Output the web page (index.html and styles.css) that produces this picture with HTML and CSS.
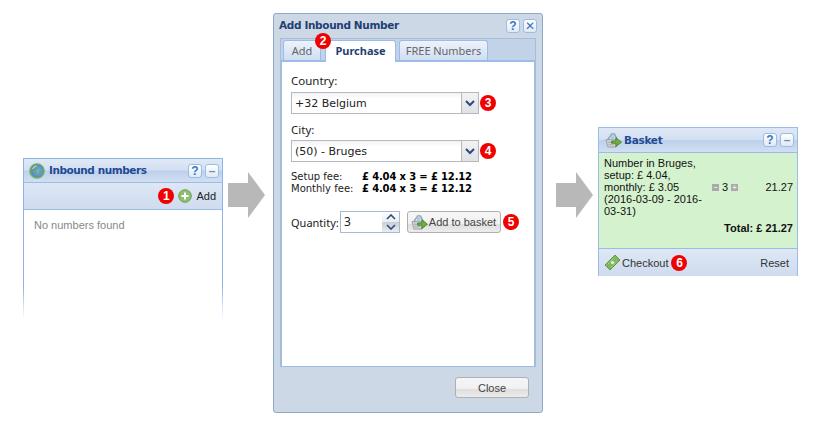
FILE: index.html
```html
<!DOCTYPE html>
<html lang="en">
<head>
<meta charset="utf-8">
<title>Inbound numbers</title>
<link rel="stylesheet" href="styles.css">
</head>
<body>
<svg width="0" height="0" class="defs">
  <defs>
    <radialGradient id="earth" cx=".55" cy=".5" r=".6"><stop offset="0" stop-color="#7fb2dc"/><stop offset=".7" stop-color="#4f8fc4"/><stop offset="1" stop-color="#6fae8f"/></radialGradient>
    <symbol id="basket" viewBox="0 0 18 17">
      <path d="M1 8h12l-1.500 8H3z" fill="#ccd0d4" stroke="#9aa2a8"/>
      <path d="M3 8l4-6h3l3 6" fill="none" stroke="#8aa2ba" stroke-width="1.500"/>
      <path d="M6 3h4v5H6z" fill="#b3c6da"/>
      <path d="M3 11h7M3.500 13.500h6" stroke="#a7adb2"/>
      <path d="M7 9.500h4.500V6l6 4.800-6 4.800V12H7z" fill="#72ad3f" stroke="#3e7a24" stroke-width=".8"/>
    </symbol>
  </defs>
</svg>

<section class="win win-list">
  <header class="head">
    <svg class="globe" width="16" height="16" viewBox="0 0 16 16"><circle cx="8" cy="8" r="7.200" fill="url(#earth)" stroke="#79b04f" stroke-width="1.300"/><path d="M4 5l3-2 2 2-2 3 1 3-2 1-2-3zM10 8l3-1 0 3-2 2z" fill="#6f9f8a"/><path d="M3.500 6a5 5 0 0 1 4-3" fill="none" stroke="#d8ecd0"/></svg>
    <h2 class="title">Inbound numbers</h2>
    <span class="tool">?</span><span class="tool tool-min">–</span>
  </header>
  <div class="toolbar">
    <span class="badge">1</span>
    <svg class="plus" width="14" height="14" viewBox="0 0 14 14"><circle cx="7" cy="7" r="6.300" fill="#8cc06f" stroke="#6d9f57"/><path d="M7 3.500v7M3.500 7h7" stroke="#fff" stroke-width="2"/></svg>
    <span class="add-label">Add</span>
  </div>
  <p class="empty">No numbers found</p>
</section>

<svg class="arrow arrow-a" width="37" height="46" viewBox="0 0 37 46"><path d="M0 11h20V0l17 23-17 23V35H0z" fill="#b8b8b8"/></svg>

<section class="win win-dialog">
  <header class="dialog-head">
    <h2 class="dialog-title">Add Inbound Number</h2>
    <span class="tool">?</span><span class="tool tool-close">✕</span>
  </header>
  <div class="tabbox">
    <nav class="tabs">
      <span class="tab tab-add">Add</span>
      <span class="badge badge-tab">2</span>
      <span class="tab tab-active">Purchase</span>
      <span class="tab tab-free">FREE Numbers</span>
    </nav>
    <div class="tabbody">
      <label class="lbl">Country:</label>
      <div class="combo-row">
        <div class="combo"><span class="combo-text">+32 Belgium</span><span class="combo-btn"><svg width="10" height="7" viewBox="0 0 10 7"><path d="M1 1l4 4 4-4" fill="none" stroke="#2c4a7c" stroke-width="2"/></svg></span></div>
        <span class="badge">3</span>
      </div>
      <label class="lbl lbl-city">City:</label>
      <div class="combo-row">
        <div class="combo"><span class="combo-text">(50) - Bruges</span><span class="combo-btn"><svg width="10" height="7" viewBox="0 0 10 7"><path d="M1 1l4 4 4-4" fill="none" stroke="#2c4a7c" stroke-width="2"/></svg></span></div>
        <span class="badge">4</span>
      </div>
      <dl class="fees">
        <dt>Setup fee:</dt><dd>£ 4.04 x 3 = £ 12.12</dd>
        <dt>Monthly fee:</dt><dd>£ 4.04 x 3 = £ 12.12</dd>
      </dl>
      <div class="qty-row">
        <span class="qty-label">Quantity:</span>
        <div class="spinner">
          <span class="spin-val">3</span>
          <span class="spin-btns">
            <span class="spin-up"><svg width="10" height="6" viewBox="0 0 10 6"><path d="M1 5l4-4 4 4" fill="none" stroke="#2c4a7c" stroke-width="1.600"/></svg></span>
            <span class="spin-down"><svg width="10" height="6" viewBox="0 0 10 6"><path d="M1 1l4 4 4-4" fill="none" stroke="#2c4a7c" stroke-width="1.600"/></svg></span>
          </span>
        </div>
        <button class="btn btn-basket"><svg class="btn-ico" width="17" height="16"><use href="#basket"/></svg>Add to basket</button>
        <span class="badge">5</span>
      </div>
    </div>
  </div>
  <footer class="dialog-foot"><button class="btn btn-close">Close</button></footer>
</section>

<svg class="arrow arrow-b" width="37" height="46" viewBox="0 0 37 46"><path d="M0 11h20V0l17 23-17 23V35H0z" fill="#b8b8b8"/></svg>

<section class="win win-basket">
  <header class="head">
    <svg class="basket-ico" width="17" height="16"><use href="#basket"/></svg>
    <h2 class="title">Basket</h2>
    <span class="tool">?</span><span class="tool tool-min">–</span>
  </header>
  <div class="basket-body">
    <div class="line">
      <span class="line-desc">Number in Bruges, setup: £ 4.04, monthly: £ 3.05 (2016-03-09 - 2016-03-31)</span>
      <span class="line-qty"><span class="qbtn">−</span><span class="qnum">3</span><span class="qbtn">+</span></span>
      <span class="line-sum">21.27</span>
    </div>
    <div class="total">Total: £ 21.27</div>
  </div>
  <footer class="basket-foot">
    <svg class="ticket" width="17" height="17" viewBox="0 0 17 17"><path d="M1 11L11 1l5 5L6 16z" fill="#7fb765" stroke="#5e9a48"/><path d="M4 10l6-6M7 13l6-6" stroke="#a8d48f" stroke-dasharray="2 1"/><circle cx="8.500" cy="8.500" r="1.600" fill="#e4f2d8"/></svg>
    <span class="checkout">Checkout</span>
    <span class="badge">6</span>
    <span class="reset">Reset</span>
  </footer>
</section>
</body>
</html>
```
FILE: styles.css
```css
* { box-sizing: border-box; }
html, body { margin: 0; padding: 0; }
body {
  width: 822px;
  height: 425px;
  position: relative;
  overflow: hidden;
  background: #fff;
  font-family: "Liberation Sans", Arial, sans-serif;
  font-size: 11px;
  color: #111;
}
.defs { position: absolute; }
.win { position: absolute; }
.arrow { position: absolute; top: 172px; }
.arrow-a { left: 228px; }
.arrow-b { left: 556px; }

.badge {
  flex: none;
  width: 16px;
  height: 16px;
  border-radius: 50%;
  background: #f00000;
  color: #fff;
  font: bold 12px/16px "Liberation Sans", sans-serif;
  text-align: center;
}

.head {
  height: 24px;
  display: flex;
  align-items: center;
  padding: 0 3px 0 5px;
  border-bottom: 1px solid #9bbce6;
  background: linear-gradient(#dfe8f6 0, #d3e0f2 48%, #bdd0ec 52%, #d2dff1 100%);
}
.win-basket .head { height: 25px; padding-left: 6px; }
.title {
  flex: 1;
  margin: 0 0 2px 4px;
  font: bold 10.500px "DejaVu Sans", Verdana, sans-serif;
  letter-spacing: -.45px;
  color: #1f4a94;
}
.win-basket .title { margin: 0 0 1px 2px; letter-spacing: -.3px; }
.tool {
  flex: none;
  width: 14px;
  height: 14px;
  margin-left: 3px;
  border: 1px solid #9bbce6;
  border-radius: 3px;
  background: linear-gradient(#fff, #dfe9f6);
  color: #3a78c0;
  font: bold 12px/12px "Liberation Sans", sans-serif;
  text-align: center;
}
.tool-min { color: #6f8fb5; }

.win-list {
  left: 23px;
  top: 158px;
  width: 200px;
  height: 160px;
  border: 1px solid #9bbce6;
  border-bottom: 0;
  border-image: linear-gradient(#8fb4e6 80%, #fff) 1;
}
.toolbar {
  height: 27px;
  display: flex;
  align-items: center;
  justify-content: flex-end;
  gap: 4px;
  padding-right: 6px;
  border-bottom: 1px solid #9bbce6;
  background: linear-gradient(#dde7f5, #cfdcef);
}
.plus { flex: none; }
.add-label { font-size: 11px; color: #222; }
.empty { margin: 9px 0 0 10px; font-size: 11px; line-height: 13px; color: #888; }

.win-dialog {
  left: 273px;
  top: 13px;
  width: 270px;
  height: 400px;
  padding: 0 6px;
  display: flex;
  flex-direction: column;
  border: 1px solid #8fa8c8;
  border-radius: 3px;
  background: #cdd8e7;
}
.dialog-head {
  flex: none;
  height: 24px;
  display: flex;
  align-items: center;
  margin-left: -1px;
  margin-right: -1px;
}
.dialog-title {
  flex: 1;
  margin: 0 0 2px;
  font: bold 10.500px "DejaVu Sans", Verdana, sans-serif;
  letter-spacing: -.35px;
  color: #1f3f73;
}
.tool-close { font: 12px/12px "DejaVu Sans", sans-serif; color: #3f75b5; }
.tabbox {
  flex: 1;
  display: flex;
  flex-direction: column;
  min-height: 0;
  padding-top: 1px;
  background: #c2d2e8;
  border: 1px solid #a9bcd6;
  border-bottom: 0;
}
.tabs {
  flex: none;
  height: 22px;
  display: flex;
  align-items: flex-end;
  gap: 3px;
  padding-left: 2px;
  border-bottom: 2px solid #9bbce6;
  position: relative;
  font: 11px "Noto Sans", Tahoma, sans-serif;
}
.tab {
  height: 20px;
  padding: 2px 0 0;
  text-align: center;
  border: 1px solid #9bbce6;
  border-bottom: 0;
  border-radius: 3px 3px 0 0;
  background: linear-gradient(#eef3fa, #cfdef2);
  color: #666;
  line-height: 15px;
}
.tab-add { width: 38px; margin-right: 1px; }
.tab-active {
  width: 71px;
  height: 22px;
  margin-bottom: -2px;
  padding-top: 2px;
  font-weight: bold;
  color: #1f3f73;
  background: #fff;
}
.tab-free { width: 89px; letter-spacing: -.05px; }
.badge-tab { position: absolute; left: 34px; top: -7px; }
.tabbody {
  flex: 1;
  padding: 12px 9px 0;
  background: #fff;
  border: 1px solid #9bbce6;
  border-top: 0;
  font-family: "Noto Sans", Tahoma, sans-serif;
  font-size: 11px;
}
.lbl { display: block; height: 13px; font-size: 11.500px; line-height: 13px; color: #222; }
.lbl-city { margin-top: 9px; }
.combo-row { display: flex; align-items: center; gap: 1px; margin-top: 5px; }
.lbl-city + .combo-row { margin-top: 4px; }
.combo {
  width: 188px;
  height: 22px;
  display: flex;
  border: 1px solid #b5b9bf;
  background: linear-gradient(#f2f2f2, #fff 6px);
}
.combo-text { flex: 1; padding: 1px 3px 0; font: 11px/20px "DejaVu Sans", Tahoma, sans-serif; color: #222; }
.combo-btn {
  width: 17px;
  display: flex;
  align-items: center;
  justify-content: center;
  border-left: 1px solid #b5b9bf;
  background: linear-gradient(#f2f2f2, #dfe2e6);
}
.fees {
  display: grid;
  grid-template-columns: 71px auto;
  margin: 9px 0 0;
  font: 10px/12px "DejaVu Sans", Tahoma, sans-serif;
  color: #222;
}
.fees dt, .fees dd { margin: 0; }
.fees dd { font-weight: bold; color: #000; letter-spacing: -.15px; }
.qty-row { display: flex; align-items: center; margin-top: 16px; }
.qty-label { width: 49px; font-size: 11px; color: #222; }
.spinner { width: 60px; height: 22px; display: flex; border: 1px solid #a9b9d2; }
.spin-val { flex: 1; padding-left: 3px; font-size: 12px; line-height: 20px; color: #222; }
.spin-btns { width: 17px; display: flex; flex-direction: column; }
.spin-up, .spin-down { flex: 1; display: flex; align-items: center; justify-content: center; }
.spin-up { background: linear-gradient(#fff, #e8edf4); }
.spin-down { background: linear-gradient(#c9ced4, #e8ebef); }
.btn {
  display: flex;
  align-items: center;
  justify-content: center;
  border: 1px solid #b0b0b0;
  border-radius: 3px;
  background: linear-gradient(#f6f6f6 0, #f1f1f1 58%, #dedede 60%, #ececec 100%);
  color: #444;
  font: 11px "Liberation Sans", sans-serif;
  padding: 0;
}
.btn-basket { width: 94px; height: 22px; margin: 0 2px 0 7px; padding-right: 1px; white-space: nowrap; }
.btn-ico { margin-right: 1px; }
.dialog-foot {
  flex: none;
  height: 45px;
  padding: 10px 7px 0 0;
  display: flex;
  justify-content: flex-end;
  align-items: flex-start;
}
.btn-close { width: 74px; height: 21px; }

.win-basket {
  left: 598px;
  top: 127px;
  width: 200px;
  height: 149px;
  border: 1px solid #9bbce6;
}
.basket-body {
  height: 96px;
  padding: 4px 4px 0 5px;
  background: #d5f2ce;
  border-bottom: 1px solid #9bbce6;
}
.line { display: flex; align-items: center; line-height: 12px; }
.line-desc { width: 108px; flex: none; }
.line-qty { display: flex; align-items: center; gap: 3px; width: 46px; font-size: 11px; }
.qbtn {
  width: 7px;
  height: 7px;
  background: #aaa;
  color: #eee;
  font: bold 7px/7px "Liberation Sans", sans-serif;
  text-align: center;
}
.line-sum { flex: 1; text-align: right; }
.total { margin-top: 5px; font-weight: bold; text-align: right; }
.basket-foot {
  height: 27px;
  display: flex;
  align-items: center;
  padding: 0 8px 0 5px;
  background: linear-gradient(#dde7f5, #cfdcef);
  color: #333;
}
.ticket { flex: none; }
.checkout { margin-left: 1px; }
.basket-foot .badge { margin-left: 3px; }
.reset { margin-left: auto; }
```
